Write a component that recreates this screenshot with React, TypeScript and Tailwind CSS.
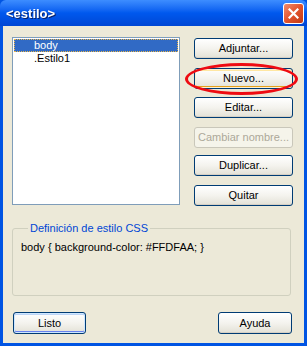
const buttons: { label: string; mt: string; variant?: 'focus' | 'disabled' }[] = [
    { label: 'Adjuntar...', mt: 'mt-0' },
    { label: 'Nuevo...', mt: 'mt-[9px]', variant: 'focus' },
    { label: 'Editar...', mt: 'mt-[8px]' },
    { label: 'Cambiar nombre...', mt: 'mt-[9px]', variant: 'disabled' },
    { label: 'Duplicar...', mt: 'mt-[7px]' },
    { label: 'Quitar', mt: 'mt-[9px]' },
];

const XpButton = ({
    label,
    className = '',
    variant,
}: {
    label: string;
    className?: string;
    variant?: 'focus' | 'default' | 'disabled';
}) => {
    if (variant === 'disabled') {
        return (
            <div
                className={`flex h-[21px] items-center justify-center rounded-[3px] border border-[#C9C7BA] bg-[#F5F4EA] text-[#ACA899] ${className}`}
            >
                {label}
            </div>
        );
    }
    const inner =
        variant === 'focus'
            ? 'shadow-[inset_0_0_0_1px_#FFF0CF,inset_0_-1px_0_1px_#E5A01A,inset_0_1px_0_1px_#FFE7A2]'
            : variant === 'default'
              ? 'shadow-[inset_0_0_0_1px_#CEE7FF,inset_0_-1px_0_1px_#6982EE,inset_0_1px_0_1px_#BCD4F6]'
              : 'shadow-[inset_0_-1px_0_0_#D6D0C5]';
    return (
        <div
            className={`flex h-[21px] items-center justify-center rounded-[3px] border border-[#003C74] bg-gradient-to-b from-white via-[#F4F3EE] to-[#E3E1D6] text-black ${inner} ${className}`}
        >
            {label}
        </div>
    );
};

const App = () => {
    return (
        <div
            className="flex h-[346px] w-[307px] flex-col bg-[#0054E3] text-[11px] leading-none"
            style={{ fontFamily: '"Liberation Sans", Arial, sans-serif' }}
        >
            {/* title bar */}
            <div className="flex h-[26px] shrink-0 items-center justify-between rounded-t-[6px] bg-gradient-to-b from-[#3D8DFF] via-[#0058EE] to-[#0047D4] pl-[6px] pr-[3px]">
                <span className="text-[13px] font-bold text-white drop-shadow-[1px_1px_0_#0A246A]">
                    &lt;estilo&gt;
                </span>
                <div className="flex h-[21px] w-[21px] items-center justify-center rounded-[3px] border border-white bg-gradient-to-br from-[#F08A6A] via-[#E2532C] to-[#C23A12]">
                    <svg width="11" height="11" viewBox="0 0 11 11">
                        <path d="M1.5 1.5 L9.5 9.5 M9.5 1.5 L1.5 9.5" stroke="white" strokeWidth="2.2" strokeLinecap="square" />
                    </svg>
                </div>
            </div>

            {/* client area */}
            <div className="relative mx-[3px] mb-[3px] flex flex-1 flex-col bg-[#ECE9D8] px-[9px] pt-[11px]">
                <div className="flex">
                    <div className="h-[168px] w-[168px] border border-[#7F9DB9] bg-white p-[1px]">
                        <div className="flex h-[13px] items-center border border-dotted border-[#E8B64A] bg-[#316AC5] pl-[19px] text-white">
                            body
                        </div>
                        <div className="flex h-[13px] items-center pl-[20px] text-black">.Estilo1</div>
                    </div>
                    <div className="ml-[14px] flex w-[99px] flex-col pt-[1px]">
                        {buttons.map((b) => (
                            <XpButton key={b.label} label={b.label} className={b.mt} variant={b.variant} />
                        ))}
                    </div>
                </div>

                <fieldset className="mt-[17px] h-[73px] w-[279px] rounded-[3px] border border-[#D0D0BF] px-[8px]">
                    <legend className="ml-[7px] px-[2px] text-[#0046D5]">Definición de estilo CSS</legend>
                    <div className="mt-[8px] text-black">body {'{'} background-color: #FFDFAA; {'}'}</div>
                </fieldset>

                <div className="mt-[16px] flex w-[280px] justify-between pl-[1px]">
                    <XpButton label="Listo" variant="default" className="h-[22px] w-[73px]" />
                    <XpButton label="Ayuda" className="h-[22px] w-[74px]" />
                </div>

                {/* red annotation ellipse around "Nuevo..." */}
                <div className="pointer-events-none absolute left-[182px] top-[37px] h-[32px] w-[113px] rounded-[50%] border-[3px] border-[#EE0B12]" />
            </div>
        </div>
    );
};

export default App;
